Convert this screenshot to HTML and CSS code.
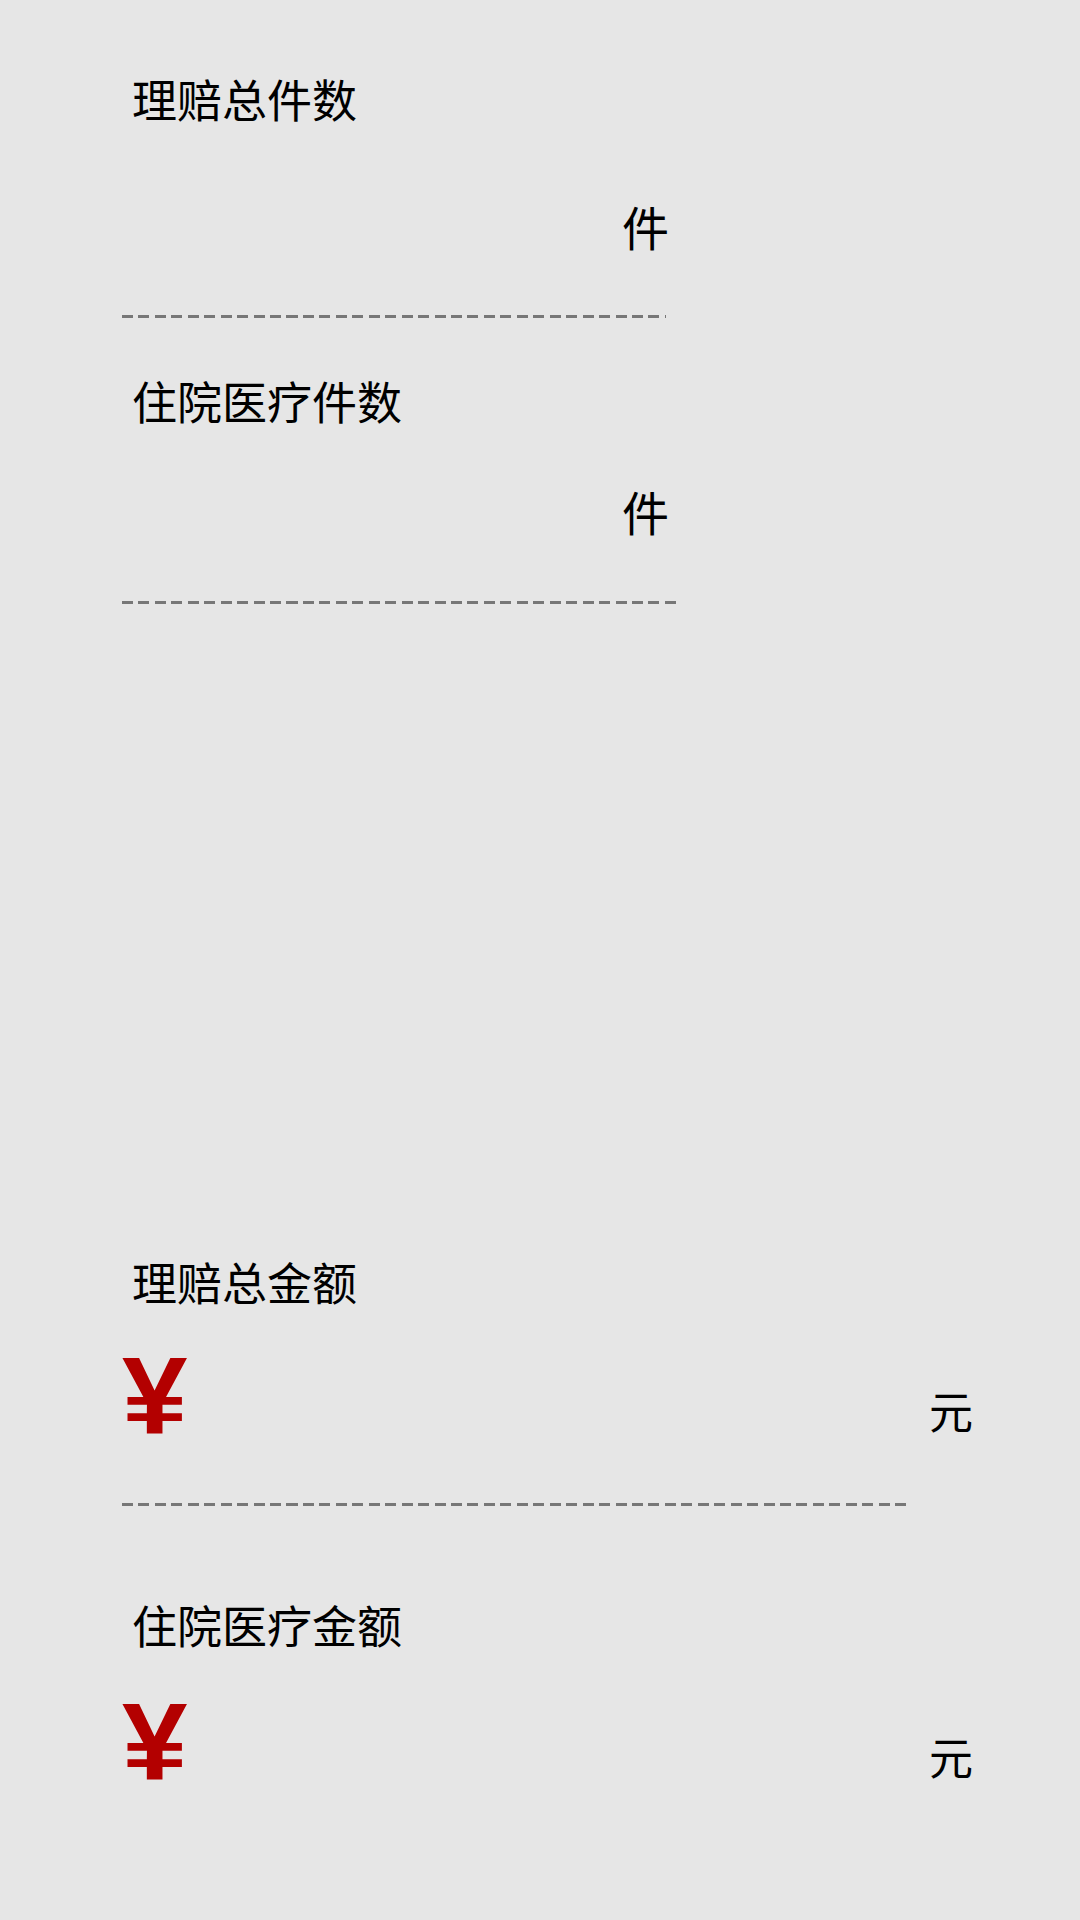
FILE: index.html
```html
<!DOCTYPE html>
<html lang="zh-CN">
<head>
<meta charset="utf-8">
<title>理赔统计</title>
<link rel="stylesheet" href="styles.css">
</head>
<body>
<main class="page">
  <section class="field field--count-total">
    <h2 class="field-title">理赔总件数</h2>
    <div class="count-row"><span class="value"></span><span class="unit unit--count">件</span></div>
    <div class="dash dash--short"></div>
  </section>

  <section class="field field--count-hosp">
    <h2 class="field-title">住院医疗件数</h2>
    <div class="count-row"><span class="value"></span><span class="unit unit--count">件</span></div>
    <div class="dash dash--mid"></div>
  </section>

  <section class="field field--amount-total">
    <h2 class="field-title">理赔总金额</h2>
    <div class="money-row"><span class="yen">¥</span><span class="value"></span><span class="unit unit--money">元</span></div>
    <div class="dash dash--long"></div>
  </section>

  <section class="field field--amount-hosp">
    <h2 class="field-title">住院医疗金额</h2>
    <div class="money-row"><span class="yen">¥</span><span class="value"></span><span class="unit unit--money">元</span></div>
  </section>
</main>
</body>
</html>
```

FILE: styles.css
```css
html, body {
  margin: 0;
  padding: 0;
  background: #e6e6e6;
}

body {
  width: 1080px;
  min-height: 1920px;
  font-family: "Noto Sans CJK SC", "Noto Sans", sans-serif;
  color: #000;
}

.page {
  padding: 76px 0 0 122px;
}

.field-title {
  margin: 0 0 0 10px;
  font-size: 45px;
  line-height: 46px;
  height: 46px;
  font-weight: 400;
}

/* count rows: unit sits at the right end of the field */
.count-row {
  width: 547px;
  display: flex;
  align-items: flex-end;
  font-size: 47px;
  line-height: 47px;
  height: 47px;
}

.value {
  flex: 1;
}

.field--count-total .count-row { margin-top: 80px; }
.field--count-hosp { margin-top: 60px; }
.field--count-hosp .count-row { margin-top: 63px; }

.field--count-total .dash { margin-top: 66px; }
.field--count-hosp .dash { margin-top: 67px; }

/* dashed underline */
.dash {
  height: 3px;
  background: repeating-linear-gradient(to right, #777 0 11px, transparent 11px 16.45px);
}
.dash--short { width: 544px; }
.dash--mid { width: 554px; }
.dash--long { width: 785px; }

/* amount rows */
.field--amount-total { margin-top: 655px; }
.field--amount-hosp { margin-top: 96px; }

.money-row {
  width: 851px;
  display: flex;
  align-items: flex-end;
  height: 109px;
}
.field--amount-total .money-row { margin-top: 37px; }
.field--amount-hosp .money-row { margin-top: 40px; }
.field--amount-total .dash { margin-top: 52px; }

.yen {
  font-family: "Liberation Sans", Arial, sans-serif;
  font-weight: 700;
  font-size: 109px;
  line-height: 109px;
  color: #b30000;
  transform: scaleX(1.08);
  transform-origin: left center;
}

.unit--money {
  font-size: 44px;
  line-height: 44px;
  margin-bottom: 19px;
}
```
